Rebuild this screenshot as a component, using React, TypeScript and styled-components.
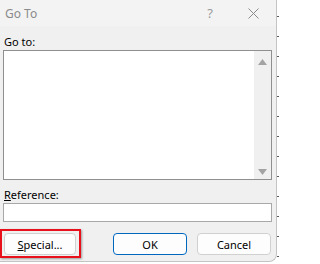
import styled, { createGlobalStyle } from 'styled-components'

const GlobalStyle = createGlobalStyle`
  html, body {
    margin: 0;
    padding: 0;
    background: #ffffff;
  }
  body {
    font-family: "Segoe UI", "Noto Sans", "Open Sans", sans-serif;
    font-size: 11px;
    color: #000;
  }
`

const Page = styled.div`
  width: 279px;
  height: 264px;
  display: flex;
  background:
    repeating-linear-gradient(
      to bottom,
      transparent 0px,
      transparent 16px,
      #5a5a5a 16px,
      #5a5a5a 17px,
      transparent 17px,
      transparent 20px
    ) right top / 2px 100% no-repeat,
    #ffffff;
`

const Dialog = styled.div`
  width: 276px;
  height: 261px;
  background: #f0f0f0;
  border-right: 1px solid #c4c4c4;
  border-bottom: 1px solid #c4c4c4;
  border-bottom-right-radius: 8px;
  display: flex;
  flex-direction: column;
  overflow: hidden;
`

const TitleBar = styled.div`
  height: 26px;
  flex-shrink: 0;
  background: #f3f3f3;
  display: flex;
  align-items: center;
  padding-left: 5px;
`

const Title = styled.span`
  flex: 1;
  color: #8a8a8a;
  font-size: 12px;
`

const TitleButton = styled.span<{ $w: number }>`
  width: ${p => p.$w}px;
  display: flex;
  justify-content: center;
  align-items: center;
  color: #9a9a9a;
  font-size: 13px;
`

const Body = styled.div`
  padding: 8px 4px 0 3px;
  display: flex;
  flex-direction: column;
`

const Label = styled.div<{ $top?: number }>`
  height: 16px;
  line-height: 16px;
  padding-left: 1px;
  margin-top: ${p => p.$top ?? 0}px;
`

const Key = styled.span`
  text-decoration: underline;
`

const ListBox = styled.div`
  height: 130px;
  box-sizing: border-box;
  background: #fff;
  border: 1px solid #8f8f8f;
  display: flex;
  justify-content: flex-end;
`

const ScrollBar = styled.div`
  width: 17px;
  background: #f0f0f0;
  display: flex;
  flex-direction: column;
  justify-content: space-between;
  align-items: center;
  padding: 8px 0 4px;
`

const Arrow = styled.svg`
  width: 9px;
  height: 6px;
  display: block;
`

const Input = styled.div`
  height: 19px;
  box-sizing: border-box;
  background: #fff;
  border: 1px solid #a8a8a8;
`

const ButtonRow = styled.div`
  margin-top: 11px;
  display: flex;
  align-items: center;
  padding-left: 1px;
`

const ButtonWrap = styled.div`
  position: relative;
  display: flex;
`

const Highlight = styled.div`
  position: absolute;
  left: -4px;
  top: -4px;
  right: -5px;
  bottom: -3px;
  border: 2px solid #e8101a;
  box-shadow: 1px 1px 2px rgba(0, 0, 0, 0.35);
  pointer-events: none;
`

const Button = styled.button<{ $primary?: boolean; $w: number; $ml?: number }>`
  width: ${p => p.$w}px;
  height: 22px;
  margin-left: ${p => p.$ml ?? 0}px;
  box-sizing: border-box;
  background: #fdfdfd;
  border: 1px solid ${p => (p.$primary ? '#0067c0' : '#d0d0d0')};
  border-radius: 4px;
  font-family: inherit;
  font-size: 11px;
  color: #000;
  padding: 0;
`

export default function App() {
  return (
    <>
      <GlobalStyle />
      <Page>
        <Dialog>
          <TitleBar>
            <Title>Go To</Title>
            <TitleButton $w={40}>?</TitleButton>
            <TitleButton $w={46}>
              <svg width="11" height="11" viewBox="0 0 11 11">
                <path d="M0.5 0.5 L10.5 10.5 M10.5 0.5 L0.5 10.5" stroke="#8a8a8a" strokeWidth="1" fill="none" />
              </svg>
            </TitleButton>
          </TitleBar>
          <Body>
            <Label>Go to:</Label>
            <ListBox>
              <ScrollBar>
                <Arrow viewBox="0 0 9 6">
                  <path d="M4.5 0 L9 6 L0 6 Z" fill="#a3a3a3" />
                </Arrow>
                <Arrow viewBox="0 0 9 6">
                  <path d="M0 0 L9 0 L4.5 6 Z" fill="#a3a3a3" />
                </Arrow>
              </ScrollBar>
            </ListBox>
            <Label $top={7}>
              <Key>R</Key>eference:
            </Label>
            <Input />
            <ButtonRow>
              <ButtonWrap>
                <Button $w={72}>
                  <Key>S</Key>pecial...
                </Button>
                <Highlight />
              </ButtonWrap>
              <Button $primary $w={74} $ml={37}>OK</Button>
              <Button $w={74} $ml={10}>Cancel</Button>
            </ButtonRow>
          </Body>
        </Dialog>
      </Page>
    </>
  )
}
